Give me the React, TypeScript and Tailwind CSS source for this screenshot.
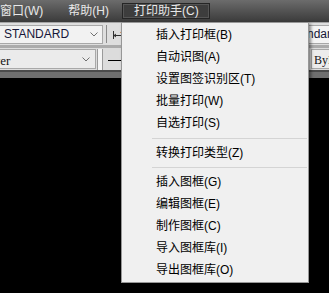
import React from "react";

const menuFont = "font-['Liberation_Sans','Noto_Sans_CJK_SC',sans-serif]";

type Entry = { label: string } | { sep: number };

const entries: Entry[] = [
  { label: "插入打印框(B)" },
  { label: "自动识图(A)" },
  { label: "设置图签识别区(T)" },
  { label: "批量打印(W)" },
  { label: "自选打印(S)" },
  { sep: 8 },
  { label: "转换打印类型(Z)" },
  { sep: 7 },
  { label: "插入图框(G)" },
  { label: "编辑图框(E)" },
  { label: "制作图框(C)" },
  { label: "导入图框库(I)" },
  { label: "导出图框库(O)" },
];

const Chevron = () => (
  <svg width="8" height="5" viewBox="0 0 8 5" className="shrink-0">
    <path d="M0.5 0.5 L4 4 L7.5 0.5" fill="none" stroke="#707070" strokeWidth="1" />
  </svg>
);

const DimIcon = () => (
  <svg width="12" height="12" viewBox="0 0 12 12">
    <path d="M1.5 3 V11" stroke="#303030" strokeWidth="1" />
    <path d="M1.5 7.5 H11" stroke="#303030" strokeWidth="1" />
    <path d="M2 7.5 L4 6 M2 7.5 L4 9" stroke="#303030" strokeWidth="1" fill="none" />
    <path d="M8 5 L11 1 L11 5 Z" fill="#c8702a" />
  </svg>
);

function DropMenu() {
  return (
    <div
      className={`absolute left-[121px] top-[22px] w-[188px] bg-[#f0f0f0] border border-[#979797] py-[1px] shadow-[2px_2px_3px_rgba(0,0,0,0.45)] ${menuFont}`}
    >
      {entries.map((e, i) =>
        "sep" in e ? (
          <div key={i} className="flex items-center pl-[30px] pr-[1px]" style={{ height: e.sep }}>
            <div className="h-px w-full bg-[#d4d4d4]" />
          </div>
        ) : (
          <div key={i} className="h-[22px] flex items-center pl-[34px] text-[12px] text-black leading-none">
            {e.label}
          </div>
        )
      )}
    </div>
  );
}

export default function App() {
  return (
    <div className="relative w-[329px] h-[293px] overflow-hidden bg-black">
      {/* menu bar */}
      <div className={`h-[22px] flex items-center bg-gradient-to-b from-[#6c6c6c] to-[#3b3b3b] text-[12px] text-[#e8e8e8] leading-none ${menuFont}`}>
        <span>窗口(W)</span>
        <span className="ml-[25px]">帮助(H)</span>
        <div className="ml-[13px] w-[88px] h-[16px] flex items-center pl-[11px] bg-[#3d3d3d] border border-[#252525] shadow-[inset_0_0_0_1px_#555]">
          打印助手(C)
        </div>
      </div>

      {/* toolbar row 1 */}
      <div className="h-[23px] flex items-center bg-[#dedede] border-t border-[#a5a5a5] font-['Liberation_Sans',sans-serif]">
        <div className="w-[103px] h-[19px] shrink-0 flex items-center justify-between pl-[4px] pr-[4px] bg-[#f2f2f2] border border-l-0 border-[#a8a8a8]">
          <span className="text-[12px] text-[#161638] leading-none">STANDARD</span>
          <Chevron />
        </div>
        <div className="ml-[3px] w-px h-[18px] bg-[#8a8a8a]" />
        <div className="ml-[5px]">
          <DimIcon />
        </div>
        <div className="ml-auto w-[40px] h-[19px] shrink-0 flex items-center bg-[#f4f4f4] border border-r-0 border-[#a8a8a8] overflow-hidden">
          <span className="text-[12px] text-[#161638] leading-none whitespace-nowrap -ml-[1px]">Standard</span>
        </div>
      </div>
      <div className="h-[3px] bg-[#ababab]" />

      {/* toolbar row 2 */}
      <div className="h-[22px] flex items-center bg-[#dcdcdc]">
        <div className="w-[96px] h-[20px] shrink-0 flex items-center justify-between pr-[5px] bg-[#ebebeb] border border-l-0 border-[#a8a8a8] overflow-hidden">
          <span className="text-[13px] text-[#141414] leading-none whitespace-nowrap font-['Liberation_Serif',serif] -ml-[20px] mt-[2px]">Layer</span>
          <Chevron />
        </div>
        <div className="ml-[1px] w-[6px] h-[21px] bg-[#f4f4f4] border-x border-[#9a9a9a]" />
        <div className="ml-[5px] w-[16px] h-px bg-black mt-[2px]" />
        <div className="ml-auto w-[18px] h-[20px] shrink-0 flex items-center pl-[2px] bg-[#ececec] border border-r-0 border-[#a8a8a8] overflow-hidden">
          <span className="text-[12px] text-[#141414] leading-none whitespace-nowrap font-['Liberation_Serif',serif] mt-[2px]">ByLayer</span>
        </div>
      </div>

      {/* lower strip */}
      <div className="h-[2px] bg-[#4b4b4b]" />
      <div className="h-[6px] bg-[#6f6f6f]" />

      <DropMenu />
    </div>
  );
}
